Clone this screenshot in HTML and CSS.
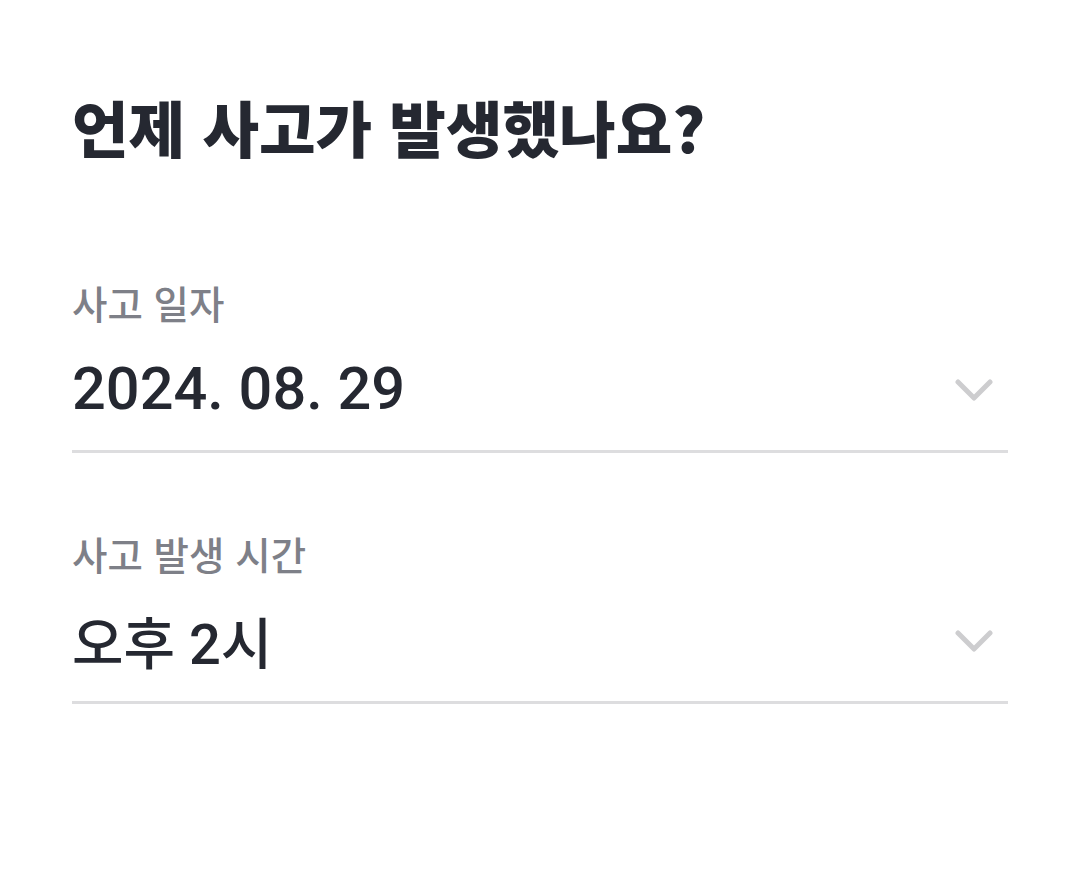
FILE: index.html
```html
<!DOCTYPE html>
<html lang="ko">
<head>
<meta charset="utf-8">
<link rel="stylesheet" href="styles.css">
</head>
<body>
<main class="page">
  <h1 class="title">언제 사고가 발생했나요?</h1>
  <section class="field first">
    <div class="label">사고 일자</div>
    <div class="select">
      <span class="value num">2024. 08. 29</span>
      <svg class="chev" width="38" height="24" viewBox="0 0 38 24"><path d="M3 3 L19 19 L35 3" fill="none" stroke="#cdcdcf" stroke-width="5" stroke-linecap="round" stroke-linejoin="round"/></svg>
    </div>
  </section>
  <section class="field">
    <div class="label">사고 발생 시간</div>
    <div class="select">
      <span class="value ko">오후 2시</span>
      <svg class="chev" width="38" height="24" viewBox="0 0 38 24"><path d="M3 3 L19 19 L35 3" fill="none" stroke="#cdcdcf" stroke-width="5" stroke-linecap="round" stroke-linejoin="round"/></svg>
    </div>
  </section>
</main>
</body>
</html>
```
FILE: styles.css
```css
html, body {
  margin: 0;
  padding: 0;
  background: #ffffff;
}
body {
  font-family: Roboto, "Noto Sans CJK KR", sans-serif;
  color: #252831;
}
.page {
  padding: 87px 71px 0 72px;
}
.title {
  margin: 0;
  font-family: "Noto Sans CJK KR", sans-serif;
  font-weight: 900;
  font-size: 61.5px;
  line-height: 80px;
  letter-spacing: 0;
  color: #252831;
}
.field.first {
  margin-top: 110px;
}
.field {
  margin-top: 75px;
}
.label {
  font-family: "Noto Sans CJK KR", sans-serif;
  font-size: 38.5px;
  line-height: 50px;
  color: #7e8088;
  font-weight: 500;
}
.select {
  display: flex;
  align-items: center;
  justify-content: space-between;
  height: 126px;
  border-bottom: 3px solid #dddddf;
  box-sizing: border-box;
}
.value {
  font-family: Roboto, "Noto Sans CJK KR", sans-serif;
  font-size: 59.5px;
  font-weight: 500;
  color: #252831;
}
.value.ko {
  font-size: 56px;
  font-weight: 500;
}
.chev {
  margin-right: 15px;
  margin-top: 4px;
}
```
